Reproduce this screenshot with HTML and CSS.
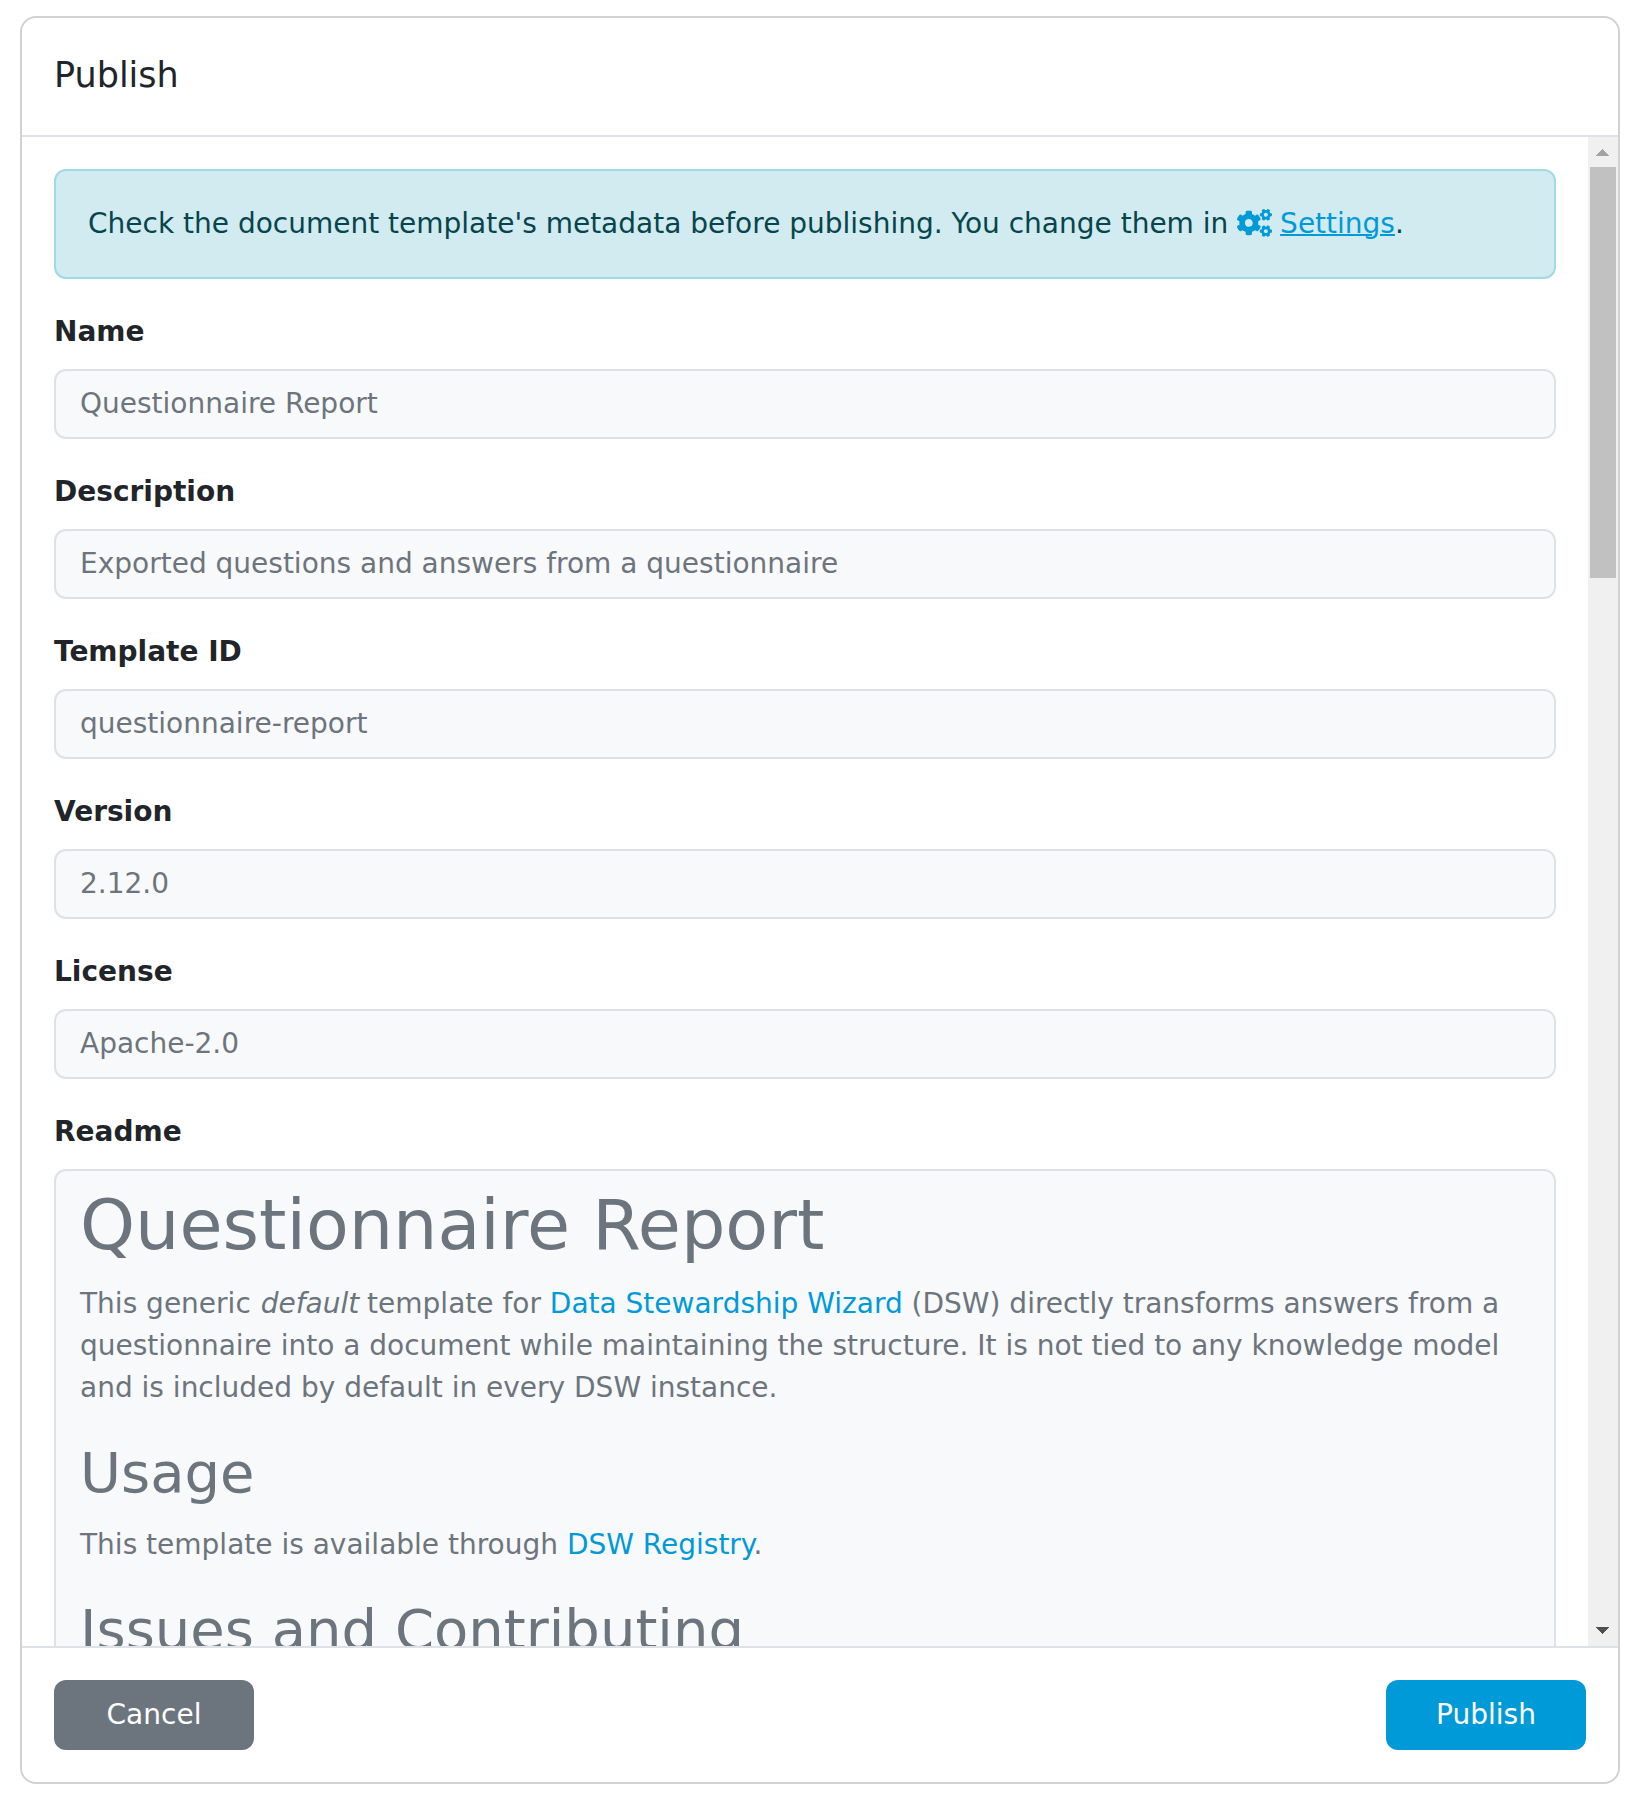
FILE: index.html
```html
<!DOCTYPE html>
<html lang="en">
<head>
<meta charset="utf-8">
<title>Publish</title>
<link rel="stylesheet" href="styles.css">
</head>
<body>
<div class="modal">
  <header class="modal-header"><h5 class="modal-title">Publish</h5></header>
  <div class="modal-body">
    <div class="content">
      <div class="alert">Check the document template's metadata before publishing. You change them in <svg class="icon" viewBox="0 0 640 512" aria-hidden="true"><defs><path id="gear" d="M512.1 191l-8.2 14.3c-3 5.3-9.4 7.5-15.1 5.4-11.8-4.4-22.6-10.7-32.1-18.6-4.6-3.8-5.8-10.5-2.8-15.7l8.2-14.3c-6.9-8-12.3-17.3-15.9-27.4h-16.5c-6 0-11.2-4.3-12.2-10.3-2-12-2.1-24.6 0-37.1 1-6 6.2-10.4 12.2-10.4h16.5c3.6-10.1 9-19.4 15.9-27.4l-8.2-14.3c-3-5.2-1.9-11.9 2.8-15.7 9.5-7.9 20.4-14.2 32.1-18.6 5.7-2.1 12.1.1 15.1 5.4l8.2 14.3c10.5-1.9 21.2-1.9 31.7 0L552 6.3c3-5.3 9.4-7.5 15.1-5.4 11.8 4.4 22.6 10.7 32.1 18.6 4.6 3.8 5.8 10.5 2.8 15.7l-8.2 14.3c6.9 8 12.3 17.3 15.9 27.4h16.5c6 0 11.2 4.3 12.2 10.3 2 12 2.1 24.6 0 37.1-1 6-6.2 10.4-12.2 10.4h-16.5c-3.6 10.1-9 19.4-15.9 27.4l8.2 14.3c3 5.2 1.9 11.9-2.8 15.7-9.5 7.9-20.4 14.2-32.1 18.6-5.7 2.1-12.1-.1-15.1-5.4l-8.2-14.3c-10.4 1.9-21.2 1.9-31.7 0zm-10.5-58.8c38.5 29.6 82.4-14.3 52.8-52.8-38.5-29.7-82.4 14.3-52.8 52.8z"/></defs><use href="#gear"/><use href="#gear" y="299"/><path d="M386.3 286.1l33.7 16.8c10.1 5.8 14.5 18.1 10.5 29.1-8.9 24.2-26.4 46.4-42.6 65.8-7.4 8.9-20.2 11.1-30.3 5.3l-29.1-16.8c-16 13.7-34.6 24.6-54.9 31.7v33.6c0 11.6-8.3 21.6-19.7 23.6-24.6 4.2-50.4 4.4-75.9 0-11.5-2-20-11.9-20-23.6V418c-20.3-7.2-38.9-18-54.9-31.7L74 403c-10 5.8-22.9 3.6-30.3-5.3-16.2-19.4-33.3-41.6-42.2-65.7-4-10.9.4-23.2 10.5-29.1l33.3-16.8c-3.9-20.9-3.9-42.4 0-63.4L12 205.8c-10.1-5.8-14.6-18.1-10.5-29 8.9-24.2 26-46.4 42.2-65.8 7.4-8.9 20.2-11.1 30.3-5.3l29.1 16.8c16-13.7 34.6-24.6 54.9-31.7V57.1c0-11.5 8.2-21.5 19.6-23.5 24.6-4.2 50.5-4.4 76-.1 11.5 2 20 11.9 20 23.6v33.6c20.3 7.2 38.9 18 54.9 31.7l29.1-16.8c10-5.8 22.9-3.6 30.3 5.3 16.2 19.4 33.2 41.6 42.1 65.8 4 10.9.1 23.2-10 29.1l-33.7 16.8c3.9 21 3.9 42.5 0 63.5zm-117.6 21.1c59.2-77-28.7-164.9-105.7-105.7-59.2 77 28.7 164.9 105.7 105.7z"/></svg> <a class="settings" href="#">Settings</a>.</div>
      <div class="group"><div class="label">Name</div><div class="field">Questionnaire Report</div></div>
      <div class="group"><div class="label">Description</div><div class="field">Exported questions and answers from a questionnaire</div></div>
      <div class="group"><div class="label">Template ID</div><div class="field">questionnaire-report</div></div>
      <div class="group"><div class="label">Version</div><div class="field">2.12.0</div></div>
      <div class="group"><div class="label">License</div><div class="field">Apache-2.0</div></div>
      <div class="group"><div class="label">Readme</div>
        <div class="field">
          <h1>Questionnaire Report</h1>
          <p>This generic <em>default</em> template for <a href="#">Data Stewardship Wizard</a> (DSW) directly transforms answers from a questionnaire into a document while maintaining the structure. It is not tied to any knowledge model and is included by default in every DSW instance.</p>
          <h2>Usage</h2>
          <p>This template is available through <a href="#">DSW Registry</a>.</p>
          <h2>Issues and Contributing</h2>
        </div>
      </div>
    </div>
    <div class="scrollbar">
      <svg class="arrow arrow-up" viewBox="0 0 30 30" shape-rendering="crispEdges"><path d="M14.8 12l7.1 7H7.7z"/></svg>
      <div class="thumb"></div>
      <svg class="arrow arrow-down" viewBox="0 0 30 30" shape-rendering="crispEdges"><path d="M7.7 11h14.2l-7.1 7z"/></svg>
    </div>
  </div>
  <footer class="modal-footer">
    <button class="btn btn-cancel">Cancel</button>
    <button class="btn btn-publish">Publish</button>
  </footer>
</div>
</body>
</html>
```
FILE: styles.css
```css
* { box-sizing: border-box; }
body {
  margin: 0;
  padding: 16px 20px 24px;
  height: 1808px;
  background: #fff;
  color: #212529;
  font: 28px/42px "DejaVu Sans", sans-serif;
}
h1, h2, h5, p { margin: 0; font-weight: 400; }
a { color: #019ad8; text-decoration: none; }
em { margin-right: -1px; padding-left: 1px; }
.modal {
  display: flex;
  flex-direction: column;
  height: 1768px;
  border: 2px solid #d2d2d2;
  border-radius: 16px;
  overflow: hidden;
}
.modal-header { flex: none; height: 119px; padding: 31px 32px; border-bottom: 2px solid #dee2e6; }
.modal-title { font-size: 35px; line-height: 52.5px; }
.modal-body { display: flex; flex: 1; min-height: 0; overflow: hidden; }
.content { flex: 1; min-width: 0; padding: 32px; }
.alert {
  padding: 32px;
  border: 2px solid #a0dae2;
  border-radius: 12px;
  background: #d1ebf0;
  color: #07454d;
}
.icon { width: 35px; height: 28px; margin-right: -1px; vertical-align: -3.5px; fill: #019ad8; }
.settings { text-decoration: underline; text-decoration-thickness: 2px; }
.group { margin-top: 32px; }
.label { margin-bottom: 16px; font-weight: 700; }
.field {
  padding: 12px 24px;
  border: 2px solid #dee2e6;
  border-radius: 12px;
  background: #f8f9fb;
  color: #6c757d;
}
.field h1 { margin-bottom: 16px; font-size: 70px; line-height: 84px; }
.field h2 { margin-bottom: 19px; font-size: 56px; line-height: 64px; }
.field p { margin-bottom: 32px; }
.scrollbar { display: flex; flex-direction: column; flex: none; width: 30px; background: #f0f0f0; }
.arrow { flex: none; width: 30px; height: 30px; }
.arrow-up { fill: #a3a3a3; }
.arrow-down { margin-top: auto; fill: #505050; }
.thumb { height: 411px; margin: 0 2px; background: #c1c1c1; }
.modal-footer {
  display: flex;
  flex: none;
  justify-content: space-between;
  padding: 32px;
  border-top: 2px solid #dee2e6;
}
.btn {
  width: 200px;
  height: 70px;
  padding: 0;
  border: 0;
  border-radius: 12px;
  color: #fff;
  font: inherit;
}
.btn-cancel { background: #6c757d; }
.btn-publish { background: #019ad8; }
```
